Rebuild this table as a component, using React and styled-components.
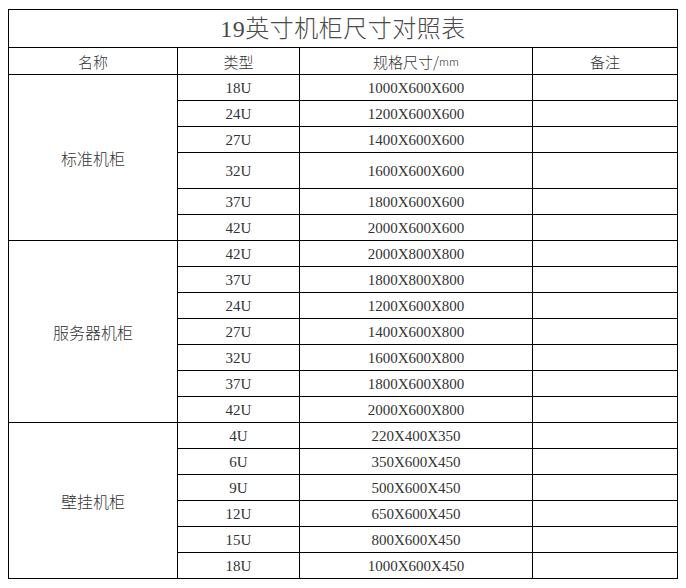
import React from "react";
import styled, { createGlobalStyle } from "styled-components";

const GlobalStyle = createGlobalStyle`
  body {
    margin: 9px 0 0 8px;
    background: #ffffff;
  }
`;

const Sheet = styled.div`
  display: grid;
  width: 670px;
  grid-template-columns: 169px 122px 233px 145px;
  grid-template-rows: ${(p) => p.rows};
  border-top: 1px solid #000;
  border-left: 1px solid #000;
  box-sizing: border-box;
  font-family: "Liberation Serif", "Noto Sans CJK SC", serif;
  color: #333;
`;

const Cell = styled.div`
  box-sizing: border-box;
  border-right: 1px solid #000;
  border-bottom: 1px solid #000;
  display: flex;
  align-items: center;
  justify-content: center;
  padding-top: 1px;
  font-size: 15px;
  line-height: 1;
  white-space: nowrap;
`;

const Title = styled(Cell)`
  grid-column: 1 / span 4;
  font-size: 24px;
  font-weight: 300;
  color: #4a4a4a;
  letter-spacing: 0.5px;
`;

const Head = styled(Cell)`
  font-family: "Noto Sans CJK SC", sans-serif;
  font-size: 15px;
  font-weight: 300;
  color: #333;
`;

const Group = styled(Cell)`
  grid-row: span ${(p) => p.span};
  font-family: "Noto Sans CJK SC", sans-serif;
  font-size: 16px;
  font-weight: 300;
  color: #333;
`;

const Unit = styled.span`
  font-size: 11px;
`;

const groups = [
  {
    name: "标准机柜",
    rows: [
      ["18U", "1000X600X600"],
      ["24U", "1200X600X600"],
      ["27U", "1400X600X600"],
      ["32U", "1600X600X600", 36],
      ["37U", "1800X600X600"],
      ["42U", "2000X600X600"],
    ],
  },
  {
    name: "服务器机柜",
    rows: [
      ["42U", "2000X800X800"],
      ["37U", "1800X800X800"],
      ["24U", "1200X600X800"],
      ["27U", "1400X600X800"],
      ["32U", "1600X600X800"],
      ["37U", "1800X600X800"],
      ["42U", "2000X600X800"],
    ],
  },
  {
    name: "壁挂机柜",
    rows: [
      ["4U", "220X400X350"],
      ["6U", "350X600X450"],
      ["9U", "500X600X450"],
      ["12U", "650X600X450"],
      ["15U", "800X600X450"],
      ["18U", "1000X600X450"],
    ],
  },
];

export default function App() {
  const heights = ["38px", "27px"];
  groups.forEach((g) => g.rows.forEach((r) => heights.push(`${r[2] || 26}px`)));

  return (
    <>
      <GlobalStyle />
      <Sheet rows={heights.join(" ")}>
        <Title>19英寸机柜尺寸对照表</Title>
        <Head>名称</Head>
        <Head>类型</Head>
        <Head>
          规格尺寸/<Unit>mm</Unit>
        </Head>
        <Head>备注</Head>
        {groups.map((g) => (
          <React.Fragment key={g.name}>
            <Group span={g.rows.length}>{g.name}</Group>
            {g.rows.map((r, i) => (
              <React.Fragment key={i}>
                <Cell>{r[0]}</Cell>
                <Cell>{r[1]}</Cell>
                <Cell />
              </React.Fragment>
            ))}
          </React.Fragment>
        ))}
      </Sheet>
    </>
  );
}
